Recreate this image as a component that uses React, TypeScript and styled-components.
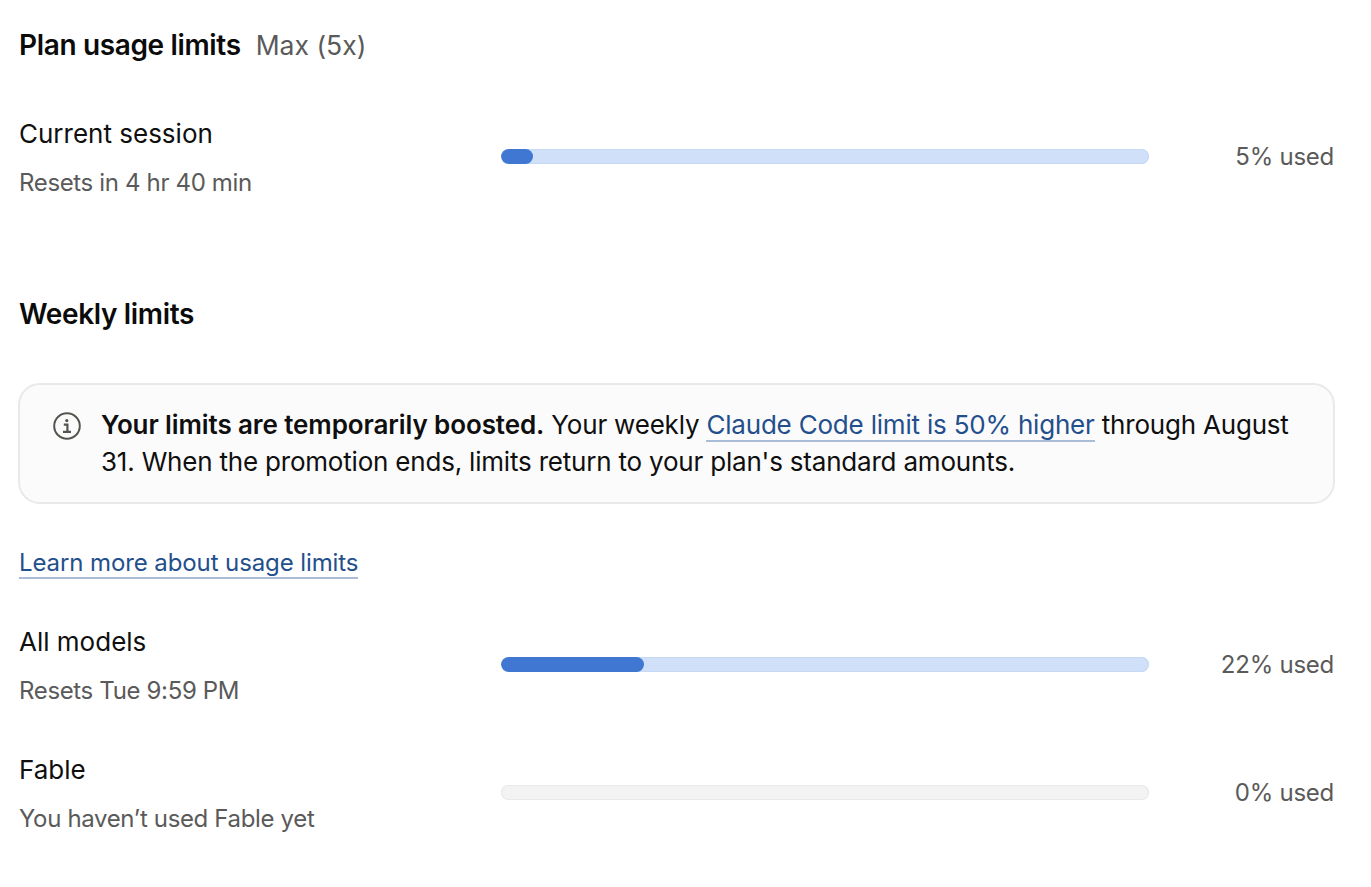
import styled, { createGlobalStyle } from "styled-components";

const GlobalStyle = createGlobalStyle`
  html, body {
    margin: 0;
    background: #fff;
  }
  body {
    font-family: "Inter", "Liberation Sans", sans-serif;
    color: #0f0f0f;
  }
`;

const Page = styled.div`
  box-sizing: border-box;
  width: 1371px;
  height: 887px;
  padding: 27px 36px 0 18px;
  overflow: hidden;
`;

const Heading = styled.div<{ $top?: number }>`
  display: flex;
  align-items: baseline;
  gap: 15px;
  padding-left: 1px;
  height: 36px;
  line-height: 36px;
  margin-top: ${(p) => p.$top ?? 0}px;
`;

const HeadingTitle = styled.h2`
  margin: 0;
  font-size: 28px;
  font-weight: 600;
  letter-spacing: -0.35px;
  color: #0b0b0b;
`;

const PlanName = styled.span`
  font-size: 26.5px;
  color: #5a5a5a;
`;

const UsageRow = styled.div<{ $top: number }>`
  display: grid;
  grid-template-columns: 483px 648px 1fr;
  align-items: start;
  margin-top: ${(p) => p.$top}px;
`;

const RowText = styled.div`
  padding-left: 1px;
  display: flex;
  flex-direction: column;
  gap: 17px;
`;

const RowTitle = styled.div`
  font-size: 26px;
  line-height: 32px;
`;

const RowSub = styled.div`
  font-size: 24px;
  line-height: 32px;
  letter-spacing: -0.35px;
  color: #5a5a5a;
`;

const Track = styled.div<{ $empty?: boolean }>`
  box-sizing: border-box;
  height: 15px;
  margin-top: 31px;
  border-radius: 8px;
  overflow: hidden;
  background: ${(p) => (p.$empty ? "#f3f3f3" : "#cfe0f8")};
  box-shadow: inset 0 0 0 1px ${(p) => (p.$empty ? "#e8e8e8" : "#c5d8f4")};
`;

const Fill = styled.div`
  height: 100%;
  border-radius: 8px;
  background: #3f77d2;
`;

const UsedLabel = styled.div`
  margin-top: 23px;
  text-align: right;
  padding-right: 1px;
  font-size: 24px;
  line-height: 32px;
  letter-spacing: -0.25px;
  color: #5a5a5a;
`;

const Notice = styled.div`
  box-sizing: border-box;
  display: flex;
  gap: 20px;
  height: 121px;
  margin-top: 51px;
  padding: 21px 34px 21px 33px;
  border: 2px solid #e9e9e9;
  border-radius: 22px;
  background: #fbfbfb;
  font-size: 26px;
  line-height: 37px;
  letter-spacing: -0.2px;
`;

const NoticeIcon = styled.svg`
  flex: none;
  width: 28px;
  height: 28px;
  margin-top: 6px;
`;

const Strong = styled.strong`
  font-weight: 600;
  letter-spacing: -0.1px;
`;

const Link = styled.a`
  color: #234f8c;
  text-decoration: none;
  border-bottom: 2px solid #a9bcd8;
`;

const LearnMore = styled.div`
  margin-top: 44px;
  padding-left: 1px;
  font-size: 24px;
  line-height: 30px;
  letter-spacing: -0.1px;
`;

function Usage({
  title,
  sub,
  percent,
  top,
}: {
  title: string;
  sub: string;
  percent: number;
  top: number;
}) {
  return (
    <UsageRow $top={top}>
      <RowText>
        <RowTitle>{title}</RowTitle>
        <RowSub>{sub}</RowSub>
      </RowText>
      <Track $empty={percent === 0}>
        {percent > 0 && <Fill style={{ width: `${percent}%` }} />}
      </Track>
      <UsedLabel>{percent}% used</UsedLabel>
    </UsageRow>
  );
}

export default function App() {
  return (
    <>
      <GlobalStyle />
      <Page>
        <Heading>
          <HeadingTitle>Plan usage limits</HeadingTitle>
          <PlanName>Max (5x)</PlanName>
        </Heading>
        <Usage title="Current session" sub="Resets in 4 hr 40 min" percent={5} top={55} />

        <Heading $top={97}>
          <HeadingTitle>Weekly limits</HeadingTitle>
        </Heading>
        <Notice>
          <NoticeIcon viewBox="0 0 28 28" fill="none" stroke="#55554f">
            <circle cx="14" cy="14" r="12.8" strokeWidth="2" />
            <circle cx="13.8" cy="8.6" r="1.6" fill="#55554f" stroke="none" />
            <path d="M10.8 12.6h3.6v7.2M10 19.8h8" strokeWidth="2.2" />
          </NoticeIcon>
          <div>
            <Strong>Your limits are temporarily boosted.</Strong> Your weekly{" "}
            <Link href="#">Claude Code limit is 50% higher</Link> through August 31. When the
            promotion ends, limits return to your plan's standard amounts.
          </div>
        </Notice>
        <LearnMore>
          <Link href="#">Learn more about usage limits</Link>
        </LearnMore>
        <Usage title="All models" sub="Resets Tue 9:59 PM" percent={22} top={48} />
        <Usage title="Fable" sub="You haven’t used Fable yet" percent={0} top={47} />
      </Page>
    </>
  );
}
